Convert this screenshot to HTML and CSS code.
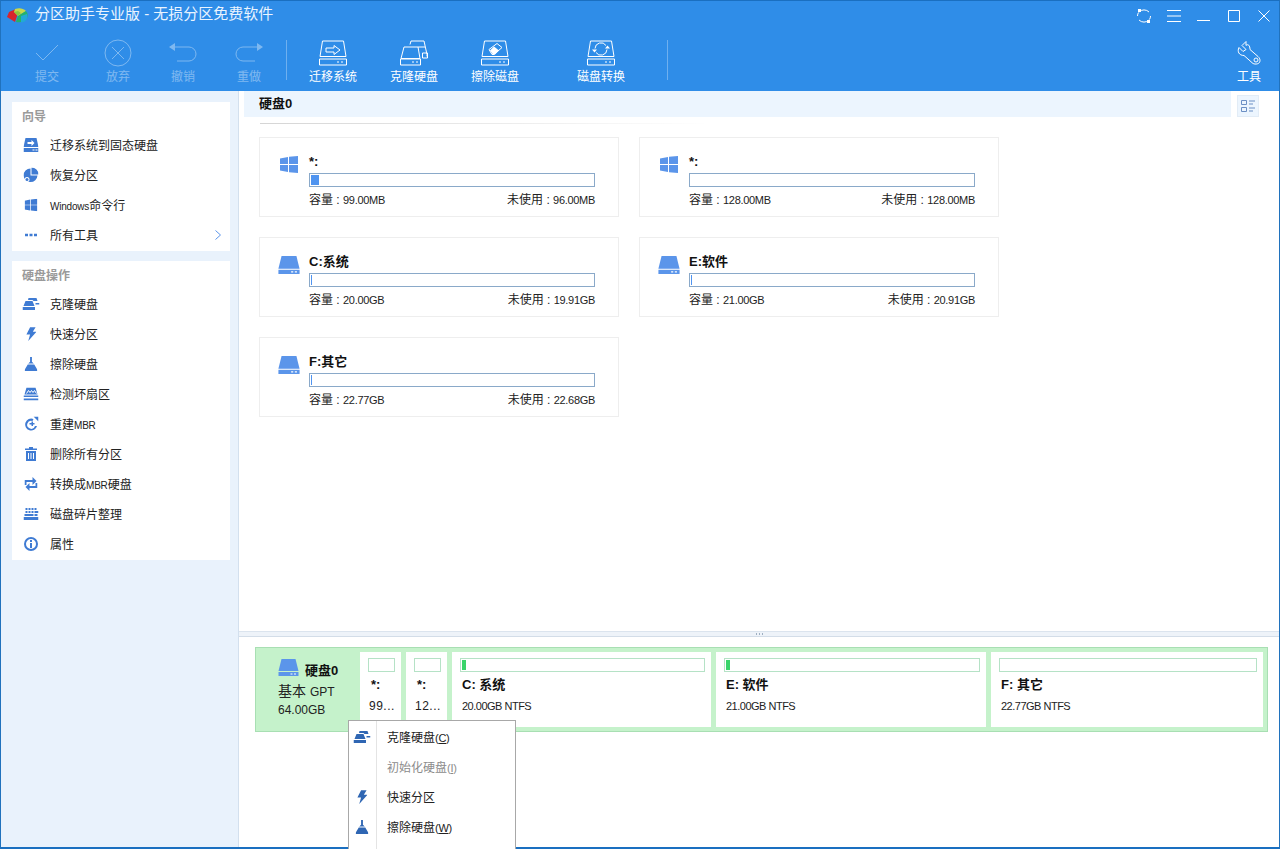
FILE: index.html
```html
<!DOCTYPE html>
<html lang="zh-CN">
<head>
    <meta charset="UTF-8">
    <title>分区助手专业版</title>
    <link rel="stylesheet" href="styles.css">
</head>
<body>
<svg class="defs" width="0" height="0">
    <symbol id="drive" viewBox="0 0 20 17">
        <path d="M3 0h14l3 12H0z"/>
        <path d="M0 13h20v4H0z"/>
        <path d="M12 14.500h2v1h-2zM15.500 14.500h2v1h-2z" fill="#fff"/>
    </symbol>
    <symbol id="win" viewBox="0 0 18 17">
        <path d="M0 2.500 8 1v7H0zM9 .8 18 0v8H9zM0 9h8v7L0 14.600zM9 9h9v8l-9-.8z"/>
    </symbol>
    <symbol id="clone" viewBox="0 0 17 12">
        <path d="M6 0h8l1 3h-4l-1-1H5.500zM13 5h4v1.500h-4z"/>
        <path d="M3 3h7l2 5H1zM0 9h12.500v3H0z"/>
    </symbol>
    <symbol id="bolt" viewBox="0 0 12 15">
        <path d="M5 0h6L8 5h4L3 15l2-7H1z"/>
    </symbol>
    <symbol id="broom" viewBox="0 0 14 15">
        <path d="M6 0h2v5l2 2H4l2-2zM3.500 8h7L14 14v1H0v-1z"/>
    </symbol>
</svg>

<div class="window">
    <header class="titlebar">
        <svg class="logo" width="22" height="18" viewBox="0 0 22 18">
            <path d="M9 2 2 5 0 10l8 5 2-6z" fill="#d8262c"/>
            <path d="M8 2c4-1.500 8-1 11 2l-8 5-4-4z" fill="#c8d84a"/>
            <path d="M11 9l8-5c2 2 2 5 1 7-2 4-7 5-11 4z" fill="#25b36a"/>
            <path d="M14 9l6-2c1 3 0 6-3 8-1 0-2 .5-3 .5z" fill="#22a9d6"/>
            <path d="M7 5l4-1 3 2-3 3z" fill="#8cc63f"/>
        </svg>
        <span class="app-title">分区助手专业版 - 无损分区免费软件</span>
        <div class="win-controls">
            <svg width="16" height="16" viewBox="0 0 16 16" class="win-btn"><path d="M3 4a7 7 0 0 1 10 0M13 12a7 7 0 0 1-10 0M1.500 8a6.500 6.500 0 0 1 1-3.500M14.500 8a6.500 6.500 0 0 1-1 3.500" fill="none" stroke="#fff"/><path d="M2 1h3v3H2zM11 12h3v3h-3z" fill="#fff"/></svg>
            <svg width="14" height="12" viewBox="0 0 14 12" class="win-btn"><path d="M0 .5h14M0 6h14M0 11.500h14" stroke="#fff"/></svg>
            <svg width="14" height="12" viewBox="0 0 14 12" class="win-btn"><path d="M0 10.500h13" stroke="#fff"/></svg>
            <svg width="12" height="12" viewBox="0 0 12 12" class="win-btn"><path d="M.5.5h11v11H.5z" fill="none" stroke="#fff"/></svg>
            <svg width="12" height="12" viewBox="0 0 12 12" class="win-btn"><path d="M.5.5l11 11M11.500.5l-11 11" stroke="#fff"/></svg>
        </div>
    </header>

    <nav class="toolbar">
        <div class="tool off">
            <svg width="26" height="24" viewBox="0 0 26 24"><path d="M2 12l7 7L24 4" fill="none" stroke="#fff"/></svg>
            <span>提交</span>
        </div>
        <div class="tool off">
            <svg width="28" height="28" viewBox="0 0 28 28"><circle cx="14" cy="14" r="13" fill="none" stroke="#fff"/><path d="M8 8l12 12M20 8 8 20" stroke="#fff"/></svg>
            <span>放弃</span>
        </div>
        <div class="tool off">
            <svg width="28" height="24" viewBox="0 0 28 24"><path d="M4 6h16a6 6 0 0 1 0 14H8" fill="none" stroke="#fff"/><path d="M0 6l6-4v8z" fill="#fff"/></svg>
            <span>撤销</span>
        </div>
        <div class="tool off">
            <svg width="28" height="24" viewBox="0 0 28 24"><path d="M24 6H8a6 6 0 0 0 0 14h12" fill="none" stroke="#fff"/><path d="M28 6l-6-4v8z" fill="#fff"/></svg>
            <span>重做</span>
        </div>
        <div class="tool-sep"></div>
        <div class="tool">
            <svg width="28" height="25" viewBox="0 0 28 25"><path d="M3.500.5h21L27 16H1zM.5 18.500h27v6H.5z" fill="none" stroke="#fff"/><path d="M7 7.500h8V5l6 4.500-6 4.500v-2.500H7z" fill="none" stroke="#fff"/><path d="M18 21h2v1h-2zM22 21h2v1h-2z" fill="#fff"/></svg>
            <span>迁移系统</span>
        </div>
        <div class="tool">
            <svg width="28" height="25" viewBox="0 0 28 25"><path d="M10 4l1-3.500h13L27 14v2M18 6.500h7" fill="none" stroke="#fff"/><path d="M4 6.500h14L20 18H1zM.5 18.500h20v6H.5zM22.500 12.500h5v5h-5z" fill="none" stroke="#fff"/><path d="M12 21h2v1h-2zM16 21h2v1h-2z" fill="#fff"/></svg>
            <span>克隆硬盘</span>
        </div>
        <div class="tool">
            <svg width="28" height="25" viewBox="0 0 28 25"><path d="M3.500.5h21L27 16H1zM.5 18.500h27v6H.5z" fill="none" stroke="#fff"/><path d="M8 9l8-6 5 4-8 7h-2z" fill="none" stroke="#fff"/><path d="M13 6l5 4-4 4h-2l-3-4z" fill="#fff"/><path d="M18 21h2v1h-2zM22 21h2v1h-2z" fill="#fff"/></svg>
            <span>擦除磁盘</span>
        </div>
        <div class="tool">
            <svg width="28" height="25" viewBox="0 0 28 25"><path d="M3.500.5h21L27 16H1zM.5 18.500h27v6H.5z" fill="none" stroke="#fff"/><path d="M8 8a6 6 0 0 1 11-3M20 9a6 6 0 0 1-11 3" fill="none" stroke="#fff"/><path d="M18 8h5l-2.500-3zM5 9h5L7.500 12z" fill="#fff"/><path d="M18 21h2v1h-2zM22 21h2v1h-2z" fill="#fff"/></svg>
            <span>磁盘转换</span>
        </div>
        <div class="tool-sep tool-sep-end"></div>
        <div class="tool tool-end">
            <svg width="24" height="25" viewBox="0 0 24 25"><path d="M9 1 5 5l4 4-3 2-4-4c-2 4 0 8 5 8l9 8c2 1 7 1 7-3 0-2-1-3-2-4l-8-7c0-4-2-6-4-4z" fill="none" stroke="#fff"/><circle cx="19" cy="19.500" r="2" fill="none" stroke="#fff"/></svg>
            <span>工具</span>
        </div>
    </nav>

    <div class="content">
        <aside class="sidebar">
            <section class="panel">
                <h3 class="panel-title">向导</h3>
                <div class="side-item">
                    <svg class="side-icon" width="15" height="14" viewBox="0 0 15 14"><path d="M2 0h11l2 9H0z"/><path d="M0 10h15v4H0z"/><path d="M4 4h4V2l3 3-3 3V6H4z" fill="#fff"/><path d="M9 11.500h2v1H9zM12 11.500h2v1h-2z" fill="#fff"/></svg>
                    <span>迁移系统到固态硬盘</span>
                </div>
                <div class="side-item">
                    <svg class="side-icon" width="15" height="15" viewBox="0 0 15 15"><path d="M8 0a7 7 0 0 1 7 7H8zM7 1v7h7a7 7 0 0 1-7 6.500A7 7 0 0 1 0 8a7 7 0 0 1 7-7z"/><circle cx="3.500" cy="12" r="2.500" fill="#fff"/><circle cx="3.500" cy="12" r="1.500"/></svg>
                    <span>恢复分区</span>
                </div>
                <div class="side-item">
                    <svg class="side-icon" width="13" height="13"><use href="#win"/></svg>
                    <span><span class="lat">Windows</span>命令行</span>
                </div>
                <div class="side-item">
                    <svg class="side-icon" width="12" height="3" viewBox="0 0 12 3"><path d="M0 0h3v3H0zM4.500 0h3v3h-3zM9 0h3v3H9z"/></svg>
                    <span>所有工具</span>
                    <svg class="chevron" width="6" height="10" viewBox="0 0 6 10"><path d="M.5.500l5 4.500-5 4.500" fill="none" stroke="#5b95ea"/></svg>
                </div>
            </section>
            <section class="panel">
                <h3 class="panel-title">硬盘操作</h3>
                <div class="side-item">
                    <svg class="side-icon" width="17" height="12"><use href="#clone"/></svg>
                    <span>克隆硬盘</span>
                </div>
                <div class="side-item">
                    <svg class="side-icon" width="11" height="14"><use href="#bolt"/></svg>
                    <span>快速分区</span>
                </div>
                <div class="side-item">
                    <svg class="side-icon" width="13" height="14"><use href="#broom"/></svg>
                    <span>擦除硬盘</span>
                </div>
                <div class="side-item">
                    <svg class="side-icon" width="15" height="13" viewBox="0 0 15 13"><path d="M3 0h9l2 7H1zM0 8h15v1.500H0zM0 11h15v2H0z"/><path d="M3 6l2-3 1.500 2L8 3l1.500 2L11 3l2 3" fill="none" stroke="#fff"/></svg>
                    <span>检测坏扇区</span>
                </div>
                <div class="side-item">
                    <svg class="side-icon" width="15" height="15" viewBox="0 0 15 15"><path d="M10 2.500a6 6 0 1 0 3.500 7h-2a4 4 0 1 1-2.500-5z"/><path d="M10 0h5v5zM6 6.500h2V5h1.500v1.500H11V8H9.500v1.500H8V8H6z"/></svg>
                    <span>重建<span class="lat">MBR</span></span>
                </div>
                <div class="side-item">
                    <svg class="side-icon" width="12" height="14" viewBox="0 0 12 14"><path d="M4 0h4v1.500h4V3H0V1.500h4zM1 4h10v10H1z"/><path d="M3.500 6v6M6 6v6M8.500 6v6" stroke="#fff"/></svg>
                    <span>删除所有分区</span>
                </div>
                <div class="side-item">
                    <svg class="side-icon" width="13" height="14" viewBox="0 0 13 14"><path d="M0 3h8V0l4 4-4 4V5H2v3H0zM13 11H5v3l-4-4 4-4v3h6V6h2z"/></svg>
                    <span>转换成<span class="lat">MBR</span>硬盘</span>
                </div>
                <div class="side-item">
                    <svg class="side-icon" width="15" height="12" viewBox="0 0 15 12"><path d="M2 0h2v2H2zM5 0h2v2H5zM8 0h2v2H8zM11 0h2v2h-2zM2 3h2v2H2zM5 3h2v2H5zM8 3h2v2H8zM11 3h4v2h-4zM1 6h9v2H1zM11 6h3v2h-3zM0 9h15v3H0z"/></svg>
                    <span>磁盘碎片整理</span>
                </div>
                <div class="side-item">
                    <svg class="side-icon" width="14" height="14" viewBox="0 0 14 14"><circle cx="7" cy="7" r="6" fill="none" stroke="#3f7bd3" stroke-width="2"/><path d="M6 3h2v2H6zM6 6h2v5H6z"/></svg>
                    <span>属性</span>
                </div>
            </section>
        </aside>

        <main class="main">
            <div class="upper">
                <div class="disk-head">
                    <div class="disk-head-bar">硬盘0</div>
                    <div class="view-toggle">
                        <svg width="14" height="14" viewBox="0 0 14 14"><path d="M.5 1.500h5v4h-5zM.5 8.500h5v4h-5z" fill="none" stroke="#6b8fc4"/><path d="M8 2h6M8 5h4M8 9h6M8 12h4" stroke="#6b8fc4"/></svg>
                    </div>
                </div>
                <div class="head-rule"></div>
                <div class="cards">
                    <div class="card">
                        <svg class="card-icon" width="18" height="17"><use href="#win"/></svg>
                        <div class="card-body">
                            <div class="card-name">*:</div>
                            <div class="usage"><div class="usage-fill" style="width:8px"></div></div>
                            <div class="card-stats"><span>容量 : <span class="num">99.00MB</span></span><span>未使用 : <span class="num">96.00MB</span></span></div>
                        </div>
                    </div>
                    <div class="card">
                        <svg class="card-icon" width="18" height="17"><use href="#win"/></svg>
                        <div class="card-body">
                            <div class="card-name">*:</div>
                            <div class="usage"></div>
                            <div class="card-stats"><span>容量 : <span class="num">128.00MB</span></span><span>未使用 : <span class="num">128.00MB</span></span></div>
                        </div>
                    </div>
                    <div class="card">
                        <svg class="card-icon drive-icon" width="22" height="18"><use href="#drive"/></svg>
                        <div class="card-body">
                            <div class="card-name">C:系统</div>
                            <div class="usage"><div class="usage-fill" style="width:1px"></div></div>
                            <div class="card-stats"><span>容量 : <span class="num">20.00GB</span></span><span>未使用 : <span class="num">19.91GB</span></span></div>
                        </div>
                    </div>
                    <div class="card">
                        <svg class="card-icon drive-icon" width="22" height="18"><use href="#drive"/></svg>
                        <div class="card-body">
                            <div class="card-name">E:软件</div>
                            <div class="usage"><div class="usage-fill" style="width:1px"></div></div>
                            <div class="card-stats"><span>容量 : <span class="num">21.00GB</span></span><span>未使用 : <span class="num">20.91GB</span></span></div>
                        </div>
                    </div>
                    <div class="card">
                        <svg class="card-icon drive-icon" width="22" height="18"><use href="#drive"/></svg>
                        <div class="card-body">
                            <div class="card-name">F:其它</div>
                            <div class="usage"><div class="usage-fill" style="width:1px"></div></div>
                            <div class="card-stats"><span>容量 : <span class="num">22.77GB</span></span><span>未使用 : <span class="num">22.68GB</span></span></div>
                        </div>
                    </div>
                </div>
            </div>

            <div class="splitter">
                <span class="grip"></span><span class="grip"></span><span class="grip"></span>
            </div>

            <div class="lower">
                <div class="disk-row">
                    <div class="disk-info">
                        <div class="disk-info-top">
                            <svg class="drive-icon" width="21" height="17"><use href="#drive"/></svg>
                            <b>硬盘0</b>
                        </div>
                        <div class="disk-type">基本 <span>GPT</span></div>
                        <div class="disk-size">64.00GB</div>
                    </div>
                    <div class="part part-s">
                        <div class="part-bar"></div>
                        <div class="part-name">*:</div>
                        <div class="part-info">99...</div>
                    </div>
                    <div class="part part-s">
                        <div class="part-bar"></div>
                        <div class="part-name">*:</div>
                        <div class="part-info">12...</div>
                    </div>
                    <div class="part part-c">
                        <div class="part-bar"><div class="part-fill"></div></div>
                        <div class="part-name">C: 系统</div>
                        <div class="part-info">20.00GB NTFS</div>
                    </div>
                    <div class="part part-e">
                        <div class="part-bar"><div class="part-fill"></div></div>
                        <div class="part-name">E: 软件</div>
                        <div class="part-info">21.00GB NTFS</div>
                    </div>
                    <div class="part part-f">
                        <div class="part-bar"></div>
                        <div class="part-name">F: 其它</div>
                        <div class="part-info">22.77GB NTFS</div>
                    </div>
                </div>
            </div>
        </main>
    </div>

    <div class="menu">
        <div class="menu-item">
            <svg class="menu-icon" width="17" height="12"><use href="#clone"/></svg>
            <span>克隆硬盘<span class="num">(<u>C</u>)</span></span>
        </div>
        <div class="menu-item disabled">
            <span>初始化硬盘<span class="num">(<u>I</u>)</span></span>
        </div>
        <div class="menu-item">
            <svg class="menu-icon" width="11" height="14"><use href="#bolt"/></svg>
            <span>快速分区</span>
        </div>
        <div class="menu-item">
            <svg class="menu-icon" width="13" height="14"><use href="#broom"/></svg>
            <span>擦除硬盘<span class="num">(<u>W</u>)</span></span>
        </div>
    </div>
</div>
</body>
</html>
```

FILE: styles.css
```css
html, body {
    margin: 0;
    padding: 0;
    background: #fff;
}
body {
    font-family: "Liberation Sans", "Noto Sans CJK SC", sans-serif;
    font-size: 12px;
    color: #222;
}
.defs {
    position: absolute;
}
.window {
    position: relative;
    width: 1280px;
    height: 849px;
    overflow: hidden;
    display: flex;
    flex-direction: column;
    box-sizing: border-box;
    background: #fff;
}
/* latin text runs narrower than the cjk next to it */
.lat {
    font-size: 10px;
    letter-spacing: -0.2px;
}
.num {
    font-size: 11px;
    letter-spacing: -0.3px;
}

/* title bar */
.titlebar {
    height: 31px;
    flex: none;
    display: flex;
    align-items: center;
    padding-left: 6px;
    background: #2f8de8;
    border-top: 1px solid #1a6fc0;
    border-left: 1px solid #2072bd;
    border-right: 1px solid #2072bd;
    box-sizing: border-box;
    color: #fff;
}
.logo {
    margin-right: 6px;
}
.app-title {
    font-size: 15px;
    line-height: 20px;
    padding-bottom: 4px;
    color: #eaf4ff;
}
.win-controls {
    margin-left: auto;
    display: flex;
    align-items: center;
}
.win-btn {
    width: 30px;
    flex: none;
}

/* toolbar */
.toolbar {
    height: 60px;
    flex: none;
    display: grid;
    grid-template-columns: 70px 72px 58px 74px 1px 92px 70px 92px 120px 7px 1fr 60px;
    padding-left: 11px;
    background: #2f8de8;
    border-left: 1px solid #2072bd;
    border-right: 1px solid #2072bd;
    box-sizing: border-box;
}
.tool {
    display: flex;
    flex-direction: column;
    align-items: center;
    color: #fff;
    position: relative;
    height: 54px;
}
.tool svg {
    height: 28px;
    margin-top: 8px;
    flex: none;
}
.tool span {
    margin-top: 1px;
    line-height: 18px;
}
.tool.off {
    opacity: 0.38;
}
.tool-sep {
    width: 1px;
    height: 40px;
    margin-top: 9px;
    background: #6fb0ef;
}
.tool-sep-end {
    justify-self: end;
}
.tool-end {
    grid-column: 12;
}

/* body */
.content {
    flex: 1;
    min-height: 0;
    display: flex;
    border-left: 1px solid #2072bd;
    border-right: 1px solid #2072bd;
    border-bottom: 2px solid #1a6fc0;
}
.sidebar {
    width: 238px;
    flex: none;
    box-sizing: border-box;
    padding: 11px 8px 0 11px;
    background: #e9f2fc;
    border-right: 1px solid #d3e0ee;
    display: flex;
    flex-direction: column;
    gap: 10px;
}
.panel {
    background: #fff;
    padding-bottom: 1px;
}
.panel-title {
    margin: 0;
    height: 28px;
    box-sizing: border-box;
    padding: 1px 0 0 10px;
    line-height: 28px;
    font-size: 12px;
    font-weight: bold;
    color: #9a9a9a;
}
.side-item {
    height: 30px;
    box-sizing: border-box;
    display: flex;
    align-items: center;
    position: relative;
    padding: 0 0 1px 38px;
}
.side-icon {
    position: absolute;
    left: 19px;
    top: 50%;
    transform: translate(-50%, -50%);
    fill: #3f7bd3;
}
.chevron {
    margin-left: auto;
    margin-right: 9px;
}

/* main area */
.main {
    flex: 1;
    min-width: 0;
    display: flex;
    flex-direction: column;
}
.upper {
    flex: 1;
    min-height: 0;
}
.disk-head {
    display: flex;
    padding-left: 5px;
    height: 26px;
}
.disk-head-bar {
    width: 987px;
    background: #ecf5fe;
    font-size: 13px;
    font-weight: bold;
    line-height: 26px;
    padding-left: 15px;
    box-sizing: border-box;
    color: #111;
}
.view-toggle {
    width: 22px;
    height: 22px;
    margin: 4px 0 0 6px;
    background: #ecf5fe;
    border: 1px solid #e2ecf6;
    box-sizing: border-box;
    display: flex;
    align-items: center;
    justify-content: center;
}
.head-rule {
    width: 450px;
    height: 1px;
    margin: 6px 0 0 21px;
    background: linear-gradient(to right, #d5d5d5, #fff);
}
.cards {
    display: grid;
    grid-template-columns: 360px 360px;
    grid-auto-rows: 80px;
    gap: 20px;
    padding: 13px 0 0 20px;
}
.card {
    border: 1px solid #eeeeee;
    box-sizing: border-box;
    display: flex;
    padding: 17px 23px 0 20px;
}
.card-icon {
    flex: none;
    fill: #5b95ea;
    margin-right: 11px;
    margin-top: 1px;
}
.drive-icon {
    fill: #5b95ea;
}
.card .drive-icon {
    margin: 1px 9px 0 -2px;
}
.card-body {
    flex: 1;
    min-width: 0;
}
.card-name {
    font-size: 13px;
    font-weight: bold;
    line-height: 14px;
    height: 18px;
    color: #111;
}
.usage {
    height: 14px;
    border: 1px solid #8aa9c9;
    box-sizing: border-box;
    padding: 1px;
}
.usage-fill {
    height: 100%;
    background: #4f94f0;
}
.card-stats {
    display: flex;
    justify-content: space-between;
    margin-top: 5px;
    line-height: 16px;
    color: #222;
}

/* splitter */
.splitter {
    height: 4px;
    flex: none;
    background: #eef3f9;
    border-top: 1px solid #dbe4ee;
    border-bottom: 1px solid #d3dde8;
    display: flex;
    justify-content: center;
    align-items: center;
    gap: 2px;
}
.grip {
    width: 1px;
    height: 2px;
    background: #9fb0c2;
}

/* disk map */
.lower {
    height: 210px;
    flex: none;
    box-sizing: border-box;
    padding: 10px 11px 0 16px;
}
.disk-row {
    height: 85px;
    box-sizing: border-box;
    display: flex;
    gap: 5px;
    padding: 4px;
    background: #c5f2cb;
    border: 1px solid #a8dfb3;
}
.disk-info {
    width: 100px;
    flex: none;
    margin-right: -5px;
    padding-left: 18px;
    box-sizing: border-box;
    color: #222;
}
.disk-info-top {
    display: flex;
    align-items: center;
    gap: 6px;
    height: 20px;
    margin-top: 5px;
    color: #111;
}
.disk-info-top b {
    font-size: 13px;
    padding-top: 4px;
}
.disk-type {
    font-size: 14px;
    line-height: 20px;
    margin-top: 4px;
}
.disk-type span {
    font-size: 12px;
}
.disk-size {
    line-height: 16px;
}
.part {
    background: #fff;
    padding: 6px 6px 0 8px;
    box-sizing: border-box;
    flex: none;
}
.part-s {
    width: 41px;
}
.part-c {
    width: 259px;
}
.part-e {
    width: 270px;
}
.part-f {
    width: 272px;
}
.part-bar {
    height: 14px;
    border: 1px solid #b5e2c6;
    box-sizing: border-box;
    padding: 1px;
}
.part-fill {
    width: 4px;
    height: 100%;
    background: #3ad46a;
}
.part-name {
    font-size: 13px;
    font-weight: bold;
    line-height: 16px;
    margin-top: 5px;
    padding-left: 2px;
    color: #111;
}
.part-info {
    font-size: 11px;
    letter-spacing: -0.5px;
    line-height: 16px;
    margin-top: 5px;
    padding-left: 2px;
    white-space: nowrap;
}
.part-s .part-name {
    padding-left: 3px;
}
.part-s .part-info {
    padding-left: 1px;
    font-size: 12px;
    letter-spacing: 0.5px;
}

/* context menu */
.menu {
    position: absolute;
    left: 348px;
    top: 720px;
    width: 168px;
    height: 140px;
    box-sizing: border-box;
    background: linear-gradient(to right, #fff 27px, #e4e4e4 27px, #e4e4e4 28px, #fff 28px);
    border: 1px solid #a8a8a8;
    padding-top: 1px;
}
.menu-item {
    height: 30px;
    box-sizing: border-box;
    display: flex;
    align-items: center;
    padding: 0 0 1px 38px;
    position: relative;
    color: #222;
}
.menu-item.disabled {
    color: #8c8c8c;
}
.menu-icon {
    position: absolute;
    left: 13px;
    top: 50%;
    transform: translate(-50%, -50%);
    fill: #2f66b3;
}
```
